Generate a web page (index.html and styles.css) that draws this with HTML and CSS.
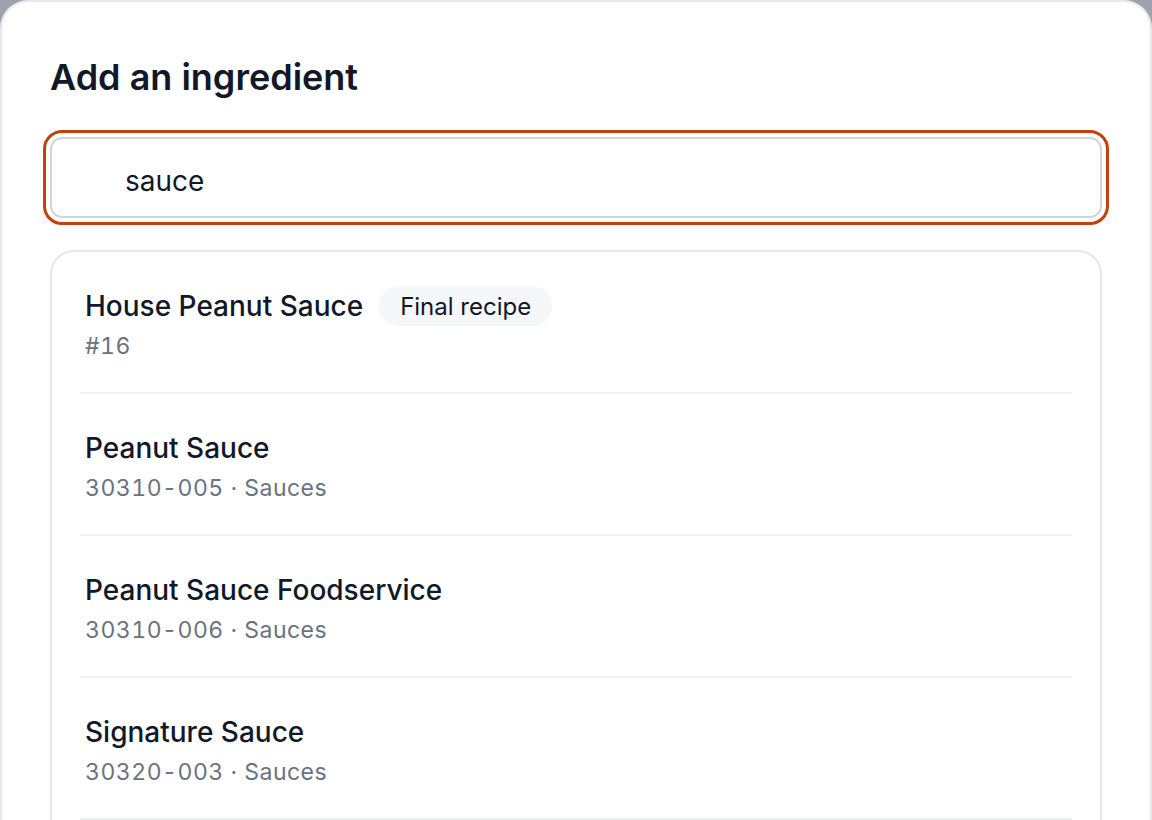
FILE: index.html
```html
<!DOCTYPE html>
<html lang="en">
<head>
<meta charset="utf-8">
<title>Add an ingredient</title>
<link rel="stylesheet" href="styles.css">
</head>
<body>
<div class="sheet">
  <h1 class="title">Add an ingredient</h1>
  <div class="search">
    <input class="search-input" type="text" value="sauce" aria-label="Search ingredients">
  </div>
  <ul class="results">
    <li class="item">
      <div class="item-head">
        <span class="item-name">House Peanut Sauce</span>
        <span class="badge">Final recipe</span>
      </div>
      <div class="item-meta">#16</div>
    </li>
    <li class="item">
      <div class="item-head"><span class="item-name">Peanut Sauce</span></div>
      <div class="item-meta">30310-005 · Sauces</div>
    </li>
    <li class="item">
      <div class="item-head"><span class="item-name">Peanut Sauce Foodservice</span></div>
      <div class="item-meta">30310-006 · Sauces</div>
    </li>
    <li class="item">
      <div class="item-head"><span class="item-name">Signature Sauce</span></div>
      <div class="item-meta">30320-003 · Sauces</div>
    </li>
  </ul>
</div>
</body>
</html>
```

FILE: styles.css
```css
* { box-sizing: border-box; }

html, body {
  margin: 0;
  height: 100%;
  overflow: hidden;
}

body {
  background: #9ca3af;
  font-family: Inter, "Noto Sans", sans-serif;
  color: #111827;
}

.sheet {
  background: #ffffff;
  border: 2px solid #e5e7eb;
  border-bottom: none;
  border-radius: 28px 28px 0 0;
  min-height: 100%;
  padding: 48px 48px 0;
}

.title {
  margin: 0;
  padding-top: 5px;
  font-size: 36px;
  line-height: 44px;
  font-weight: 600;
  color: #111827;
}

.search {
  margin-top: 38px;
}

.search-input {
  display: block;
  width: 100%;
  height: 81px;
  border: 2px solid #d1d5db;
  border-radius: 12px;
  padding: 6px 20px 0 73px;
  font-family: inherit;
  font-size: 28px;
  color: #111827;
  background: #fff;
  outline: 3px solid #c2410c;
  outline-offset: 4px;
}

.results {
  list-style: none;
  margin: 32px 0 0;
  padding: 0 28px 40px;
  border: 2px solid #e5e7eb;
  border-radius: 24px;
}

.item {
  padding: 34px 0 26px;
  border-bottom: 2px solid #f0f1f3;
}

.item-head {
  display: flex;
  align-items: center;
  gap: 16px;
  height: 40px;
  padding-left: 5px;
}

.item-name {
  font-size: 28px;
  font-weight: 500;
  color: #111827;
}

.badge {
  display: inline-flex;
  align-items: center;
  height: 40px;
  padding: 0 21px;
  border-radius: 20px;
  background: #f5f7fa;
  font-size: 24px;
  color: #111827;
}

.item-meta {
  padding-left: 5px;
  font-size: 23px;
  line-height: 40px;
  color: #6b7280;
  font-variant-numeric: tabular-nums;
  letter-spacing: 0.5px;
}
```
